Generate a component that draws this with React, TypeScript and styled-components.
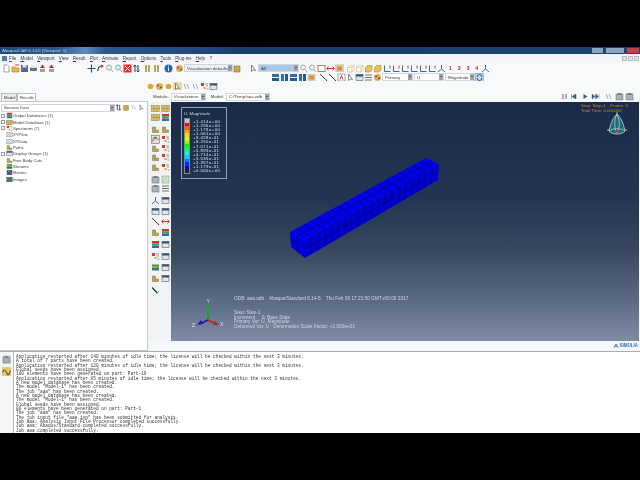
import React from "react"
import styled, { createGlobalStyle } from "styled-components"

const GlobalStyle = createGlobalStyle`
    html, body {
        margin: 0;
        padding: 0;
        background: #000;
        font-family: "Liberation Sans", Arial, sans-serif;
    }
`

const Page = styled.div`
    width: 640px;
    height: 480px;
    overflow: hidden;
    background: #000;
    padding: 47px 0;
    box-sizing: border-box;
`

const Window = styled.div`
    height: 386px;
    display: flex;
    flex-direction: column;
    background: #f6f7f9;
    color: #3a3a3a;
    font-size: 4.4px;
    overflow: hidden;
    filter: blur(0.3px);
`

const TitleBar = styled.div`
    flex: 0 0 7px;
    display: flex;
    align-items: center;
    padding-left: 2px;
    gap: 2px;
    color: #c3d3e6;
    background: linear-gradient(90deg, #1d4a7c 0, #2a5a8e 60px, #5f8cbc 85px, #2a5a8e 105px, #163f6f 250px, #1d4470 590px);
`

const TitleText = styled.span`
    flex: 1;
`

const WindowButton = styled.span<{ $w: number; $color: string }>`
    width: ${(p) => p.$w}px;
    height: 5px;
    background: ${(p) => p.$color};
    margin-right: 1px;
`

const MenuBar = styled.div`
    flex: 0 0 9px;
    display: flex;
    align-items: center;
    padding-left: 2px;
    background: #f2f4f7;
`

const MenuLogo = styled.span`
    width: 5px;
    height: 5px;
    background: #4d78ad;
    margin-right: 2px;
`

const MenuItem = styled.span`
    display: inline-block;
    margin-right: 4.3px;
    font-size: 4.5px;
    &::first-letter {
        text-decoration: underline;
    }
`

const MdiButtons = styled.div`
    margin-left: auto;
    display: flex;
    gap: 1px;
    padding-right: 1px;
`

const MdiButton = styled.span`
    width: 5px;
    height: 5px;
    background: #dfe3e8;
    border: 1px solid #b4bac2;
    box-sizing: border-box;
`

const ToolRow = styled.div<{ $h: number; $start?: number }>`
    flex: 0 0 ${(p) => p.$h}px;
    height: ${(p) => p.$h}px;
    display: flex;
    align-items: center;
    padding-left: ${(p) => p.$start ?? 0}px;
    background: #f8f9fa;
`

const Tool = styled.span<{ $gap?: number; $on?: boolean }>`
    flex: 0 0 8.8px;
    height: 8px;
    margin-left: ${(p) => p.$gap ?? 0}px;
    display: flex;
    align-items: center;
    justify-content: center;
    background: ${(p) => (p.$on ? "#e9d9a8" : "transparent")};
    color: #d3232a;
    font-size: 5.5px;
    font-weight: bold;
`

const Combo = styled.span<{ $w: number; $gap?: number; $fill?: string }>`
    flex: 0 0 ${(p) => p.$w}px;
    height: 8px;
    margin-left: ${(p) => p.$gap ?? 0}px;
    box-sizing: border-box;
    display: flex;
    align-items: center;
    padding-left: 2px;
    background: ${(p) => p.$fill ?? "#fff"};
    border: 1px solid #d3d6da;
    white-space: nowrap;
    overflow: hidden;
    position: relative;
`

const ComboArrow = styled.span`
    position: absolute;
    right: 0;
    top: 0;
    bottom: 0;
    width: 4px;
    background: #9aa2ad;
    &::after {
        content: "";
        position: absolute;
        left: 1px;
        top: 2px;
        border: 1px solid transparent;
        border-top-color: #222;
    }
`

const Label = styled.span<{ $gap?: number }>`
    margin-left: ${(p) => p.$gap ?? 0}px;
`

const Body = styled.div`
    flex: 1;
    min-height: 0;
    display: flex;
`

const LeftPanel = styled.div`
    flex: 0 0 148px;
    min-width: 0;
    display: flex;
    flex-direction: column;
    padding-top: 12px;
    box-sizing: border-box;
    background: #f8f9fa;
`

const Tabs = styled.div`
    display: flex;
    height: 8px;
    padding-left: 1px;
`

const Tab = styled.span<{ $active?: boolean }>`
    padding: 0 2px;
    line-height: 8px;
    font-size: 4.2px;
    background: ${(p) => (p.$active ? "#fff" : "#eceef1")};
    border: 1px solid #b9bec5;
    border-bottom: 0;
    box-sizing: border-box;
    width: ${(p) => (p.$active ? 19 : 16)}px;
`

const TreePanel = styled.div`
    flex: 1;
    min-width: 0;
    background: #fff;
    border: 1px solid #c3c7cd;
    border-left: 0;
    padding: 1px 1px;
    display: flex;
    flex-direction: column;
    font-size: 4.2px;
`

const TreeBar = styled.div`
    display: flex;
    align-items: center;
    height: 9px;
    margin-bottom: 0.5px;
`

const TreeTool = styled.span`
    flex: 0 0 7.6px;
    display: flex;
    justify-content: center;
`

const TreeRow = styled.div`
    height: 6.35px;
    display: flex;
    align-items: center;
    white-space: nowrap;
`

const Expander = styled.span<{ $shown: boolean }>`
    flex: 0 0 4px;
    height: 4px;
    margin-right: 1px;
    box-sizing: border-box;
    border: ${(p) => (p.$shown ? "1px solid #99a" : "0")};
`

const RightColumn = styled.div`
    flex: 1;
    min-width: 0;
    display: flex;
    flex-direction: column;
`

const Work = styled.div`
    flex: 1;
    min-height: 0;
    display: flex;
`

const Toolbox = styled.div`
    flex: 0 0 23px;
    padding-left: 2.5px;
    box-sizing: border-box;
    background: #f2f3f5;
`

const ToolboxRow = styled.div<{ $gap: number }>`
    display: flex;
    gap: 1px;
    height: 9px;
    margin-top: ${(p) => p.$gap}px;
`

const Viewport = styled.div`
    flex: 1;
    margin-right: 1px;
    position: relative;
    overflow: hidden;
    background: linear-gradient(180deg, #1a2b4a 0%, #233552 40%, #37475f 62%, #5f6e88 85%, #7f8ca6 100%);
    color: #ced4de;
`

const Legend = styled.div`
    position: absolute;
    left: 10px;
    top: 5px;
    width: 46px;
    height: 72px;
    box-sizing: border-box;
    border: 1px solid #8fa0b8;
    padding: 3px 2px;
`

const LegendBody = styled.div`
    display: flex;
    gap: 3px;
    margin-top: 2px;
`

const ColorBar = styled.div`
    flex: 0 0 6px;
    height: 56px;
    display: flex;
    flex-direction: column;
    border: 1px solid #7f8a98;
    box-sizing: border-box;
`

const ColorStep = styled.span<{ $color: string }>`
    flex: 1;
    background: ${(p) => p.$color};
`

const LegendValues = styled.div`
    padding-top: 2px;
    font-size: 4.2px;
    letter-spacing: 0.5px;
    line-height: 4.1px;
    color: #dfe4ea;
`

const StateText = styled.div`
    position: absolute;
    right: 3px;
    top: 1px;
    width: 55px;
    color: #c88a35;
    font-size: 4.4px;
    line-height: 5px;
    white-space: pre;
`

const Compass = styled.svg`
    position: absolute;
    left: 436px;
    top: 10px;
`

const Beam = styled.svg`
    position: absolute;
    left: 118px;
    top: 48px;
`

const Triad = styled.svg`
    position: absolute;
    left: 20px;
    top: 197px;
`

const Caption = styled.div`
    position: absolute;
    left: 63px;
    top: 195px;
    font-size: 4.75px;
    line-height: 4.4px;
    white-space: pre;
`

const CaptionLead = styled.div`
    margin-bottom: 10px;
`

const Strip = styled.div`
    flex: 0 0 10px;
    display: flex;
    justify-content: flex-end;
    align-items: center;
    padding-right: 2px;
    gap: 1px;
    color: #2f6fb5;
    font-size: 4.5px;
    font-weight: bold;
    background: #f6f7f8;
`

const MessageArea = styled.div`
    flex: 0 0 82px;
    display: flex;
    background: #f4f5f7;
    border-top: 1px solid #a9adb3;
    box-sizing: border-box;
`

const MessageTools = styled.div`
    flex: 0 0 13px;
    display: flex;
    flex-direction: column;
    align-items: center;
    gap: 3px;
    padding-top: 3.5px;
`

const MessageTool = styled.span<{ $on?: boolean }>`
    width: 9px;
    height: 9px;
    display: flex;
    align-items: center;
    justify-content: center;
    background: ${(p) => (p.$on ? "#e8c95c" : "#e4e6e8")};
`

const MessageLog = styled.div`
    flex: 1;
    background: #fff;
    border-left: 1px solid #b9bdc3;
    padding: 3px 0 0 2px;
    font-family: "Liberation Mono", "Courier New", monospace;
    font-size: 4.45px;
    line-height: 4.35px;
    white-space: pre;
    overflow: hidden;
    color: #333;
`

type GlyphKind = keyof typeof glyphs

// tiny toolbar drawings, all on a 9x9 grid
const glyphs = {
    doc: <path d="M2 1h3.5L7 2.5V8H2z" fill="#fff" stroke="#7a828c" strokeWidth=".7" />,
    open: <><path d="M1 3h3l1 1h3v4H1z" fill="#f0b840" stroke="#a8761c" strokeWidth=".6" /><path d="M4 1h4" stroke="#d33" /></>,
    save: <><rect x="1" y="1" width="7" height="7" fill="#54688a" /><rect x="2.5" y="1" width="4" height="2.5" fill="#dde" /></>,
    print: <><rect x="1" y="3.5" width="7" height="3.5" fill="#6b7480" /><rect x="2.5" y="1" width="4" height="3" fill="#dfe3ea" /></>,
    redUp: <><rect x="2" y="5" width="5" height="3" fill="#9aa2ad" /><path d="M4.5 .5L7 4H2z" fill="#c9252a" /></>,
    move: <path d="M4.5 .5v8M.5 4.5h8" stroke="#2f4f8a" strokeWidth="1.2" />,
    rotate: <><path d="M2 7a4 4 0 0 1 4-5" fill="none" stroke="#223" strokeWidth="1.1" /><path d="M5 .5L8 2 5.500 4z" fill="#c33" /></>,
    zoom: <><circle cx="4" cy="3.500" r="2.500" fill="#eef" stroke="#9aa" /><path d="M6 5.500L8 8" stroke="#c9a04a" /></>,
    fit: <><rect x=".5" y=".5" width="8" height="8" fill="#d33" /><path d="M2 2l5 5M7 2L2 7" stroke="#fff" /></>,
    swap: <path d="M3 8V1M1.500 2.500L3 1l1.500 1.500M6 1v7M4.500 6.500L6 8l1.500-1.500" fill="none" stroke="#334" />,
    bars: <path d="M3 1v7M6 1v7" stroke="#b08a3a" strokeWidth="1.6" />,
    info: <><circle cx="4.500" cy="4.500" r="4" fill="#2a64b0" /><path d="M4.500 3.500V7" stroke="#fff" /><path d="M4.500 1.500v1" stroke="#fff" /></>,
    palette: <><circle cx="4.500" cy="4.500" r="3.500" fill="#e0b050" /><circle cx="3" cy="3.500" r="1" fill="#c33" /><circle cx="6" cy="5.500" r="1" fill="#36a" /></>,
    ball: <><circle cx="4.500" cy="4.500" r="2.800" fill="#e8a030" /></>,
    box: <><rect x="1" y="2" width="6" height="6" fill="#c8a84a" stroke="#8a7228" strokeWidth=".6" /></>,
    cursor: <path d="M2.500 1v6.500L4.500 6l2 .5z" fill="#fff" stroke="#555" strokeWidth=".7" />,
    outline: <rect x="1" y="1.500" width="7" height="6" fill="#fff" stroke="#d0454a" strokeWidth=".8" />,
    redArrows: <path d="M1 4.500h7M2.500 2.500L.8 4.500l1.700 2M6.500 2.500l1.700 2-1.700 2" fill="none" stroke="#d0322a" />,
    orange: <><rect x=".5" y="1" width="8" height="7" fill="#c8cdd2" /><rect x="2" y="2.500" width="5" height="4" fill="#e8902c" /></>,
    panel: <><rect x="1" y="1" width="7" height="3" fill="#2c6fb2" /><rect x="1" y="5" width="7" height="3" fill="#1f5a98" /></>,
    panelWide: <><rect x="1" y="1" width="3" height="7" fill="#2c6fb2" /><rect x="5" y="1" width="3" height="7" fill="#1f5a98" /></>,
    cubeLine: <path d="M1.500 3.500L3.500 1.500H8V6L6 8H1.500zM1.500 3.500H6V8M6 3.500L8 1.500" fill="#fffdf0" stroke="#c8b878" strokeWidth=".6" />,
    cubeFill: <path d="M1.500 3.500L3.500 1.500H8V6L6 8H1.500z" fill="#e8c350" stroke="#a88a2c" strokeWidth=".6" />,
    axis: <><path d="M1.500 1.500v6h6" fill="none" stroke="#2e6fb8" /><path d="M7 1.500v3" stroke="#d0322a" /></>,
    triad: <path d="M4.500 1v4L1 8M4.500 5L8 8" fill="none" stroke="#2e6fb8" />,
    line: <path d="M1 1l7 7" stroke="#223" strokeWidth=".9" />,
    textBox: <><rect x="1" y="1" width="7" height="7" fill="#fff" stroke="#667" strokeWidth=".6" /><path d="M3 6.500l1.500-4 1.500 4" fill="none" stroke="#c33" /></>,
    table: <><rect x="1" y="1.500" width="7" height="6" fill="#dfe4ea" stroke="#56606c" strokeWidth=".6" /><rect x="1" y="1.500" width="7" height="2" fill="#33527e" /></>,
    list: <path d="M1 2h7M1 4.500h7M1 7h7" stroke="#6a7480" />,
    sync: <><rect x=".5" y=".5" width="8" height="8" fill="#c6d8ea" stroke="#7f97b0" strokeWidth=".6" /><path d="M2 4a2.500 2.500 0 0 1 5 0M7 5a2.500 2.500 0 0 1-5 0" fill="none" stroke="#2358a0" /></>,
    mesh: <><rect x=".5" y="1.500" width="8" height="6" fill="#dcc873" stroke="#8c7a36" strokeWidth=".5" /><path d="M3 1.500v6M6 1.500v6M.5 4.500h8" stroke="#8c7a36" strokeWidth=".5" /></>,
    spectrum: <><rect x="1" y="1" width="7" height="2.500" fill="#c33" /><rect x="1" y="3.500" width="7" height="2" fill="#3a3" /><rect x="1" y="5.500" width="7" height="2.500" fill="#36c" /></>,
    shape: <path d="M1.500 2h3v3h3v2.500h-6z" fill="#b5a455" stroke="#7d7030" strokeWidth=".5" />,
    contour: <><rect x=".5" y=".5" width="8" height="8" fill="#e6e0dc" stroke="#555" strokeWidth=".5" /><path d="M1.500 6.500C3 3 5 3 7.500 4.500" stroke="#c33" fill="none" /><path d="M1.500 4C3 2 5 2 6 2.500" stroke="#2a8a3c" fill="none" /></>,
    dots: <><rect x="1" y="1" width="3" height="3" fill="#d93a2a" /><rect x="3.500" y="5" width="2" height="2" fill="#e0a030" /><path d="M5 2h3M6 4h2M6.500 7h2" stroke="#7f9cb8" /></>,
    wave: <path d="M.5 5.500q2-5 4 0t4-2" fill="none" stroke="#555" strokeWidth="1.100" />,
    grey: <><rect x="1" y="2" width="7" height="6" fill="#aab0b8" stroke="#6a7078" strokeWidth=".5" /><rect x="2.500" y="1" width="4" height="2" fill="#787f88" /></>,
    pause: <path d="M3 2v5M6 2v5" stroke="#6a7480" strokeWidth="1.100" />,
    prev: <path d="M7 2v5L3 4.500zM2.500 2v5" fill="#3d5a85" stroke="#3d5a85" strokeWidth=".5" />,
    next: <path d="M2.500 2v5l4-2.500z" fill="#3d5a85" />,
    last: <path d="M1 2v5l3-2.500zM4.500 2v5l3-2.500zM8 2v5" fill="#3d5a85" stroke="#3d5a85" strokeWidth=".4" />,
    link: <path d="M2 2l2 5M5 2l2 5" stroke="#a2a8b0" />,
    sword: <><path d="M1 1.500l5 5" stroke="#222" strokeWidth="1.100" /><path d="M5 7.500L8 5.500" stroke="#3a9a4a" /></>,
    pencil: <><rect x="1" y="1" width="7" height="7" fill="#dcdcd2" stroke="#8d8f7c" strokeWidth=".5" /><path d="M2 7l4-5" stroke="#7f7" /></>,
    movie: <><rect x="1" y="1.500" width="7" height="6" fill="#3a3f8c" /><path d="M2 5l2-2 3 3" stroke="#e4c02c" fill="none" /></>,
    image: <><rect x="1" y="1.500" width="7" height="6" fill="#4f7a5a" stroke="#556" strokeWidth=".5" /></>,
    stream: <><rect x="1" y="1.500" width="7" height="6" fill="#3a9a4a" /><path d="M1 4h7" stroke="#e6c22c" /><path d="M1 6h7" stroke="#2b50c0" /></>,
    plate: <><rect x="1" y="2" width="7" height="5.500" fill="#cfd6dc" stroke="#7a8794" strokeWidth=".5" /></>,
}

const Glyph = ({ kind, size = 9 }: { kind: GlyphKind; size?: number }) => (
    <svg width={size} height={size} viewBox="0 0 9 9">
        {glyphs[kind]}
    </svg>
)

const renderTools = (kinds: GlyphKind[]) => kinds.map((k, i) => <Tool key={i}><Glyph kind={k} /></Tool>)

const MENU = ["File", "Model", "Viewport", "View", "Result", "Plot", "Animate", "Report", "Options", "Tools", "Plug-ins", "Help"]

const TREE: [string, GlyphKind, boolean][] = [
    ["Output Databases (1)", "spectrum", true],
    ["Model Database (1)", "mesh", true],
    ["Spectrums (7)", "dots", true],
    ["XYPlots", "plate", false],
    ["XYData", "plate", false],
    ["Paths", "shape", false],
    ["Display Groups (1)", "table", true],
    ["Free Body Cuts", "shape", false],
    ["Streams", "stream", false],
    ["Movies", "movie", false],
    ["Images", "image", false],
]

const TOOLBOX: [GlyphKind, GlyphKind | null, number][] = [
    ["mesh", "mesh", 1.5],
    ["mesh", "spectrum", 0],
    ["shape", "shape", 3],
    ["contour", "dots", 1],
    ["shape", "dots", 0],
    ["shape", "dots", 0],
    ["shape", "dots", 1],
    ["grey", "pencil", 3],
    ["grey", "list", 0],
    ["triad", "table", 3],
    ["table", "table", 2],
    ["line", "redArrows", 1],
    ["shape", "spectrum", 2],
    ["spectrum", "table", 3],
    ["dots", "table", 3],
    ["stream", "table", 2],
    ["shape", "table", 2],
    ["sword", null, 3],
]

const LEGEND_COLORS = ["#c4c4c4", "#ff0000", "#ff5a00", "#ffa000", "#ffd800", "#d4ff00", "#80ff00", "#00ff00", "#00ff80", "#00ffd0", "#00d0ff", "#0080ff", "#0030ff", "#0000e0", "#222222"]

const LEGEND_VALUES = ["+1.414e+00", "+1.296e+00", "+1.178e+00", "+1.061e+00", "+9.428e-01", "+8.250e-01", "+7.071e-01", "+5.893e-01", "+4.714e-01", "+3.536e-01", "+2.357e-01", "+1.179e-01", "+0.000e+00"]

const MESSAGES = [
    "Application restarted after 140 minutes of idle time; the license will be checked within the next 3 minutes.",
    "A total of 7 parts have been created.",
    "Application restarted after 120 minutes of idle time; the license will be checked within the next 3 minutes.",
    "Global seeds have been assigned.",
    "100 elements have been generated on part: Part-10",
    "Application restarted after 85 minutes of idle time; the license will be checked within the next 3 minutes.",
    "A new model database has been created.",
    'The model "Model-1" has been created.',
    'The job "aaa" has been created.',
    "A new model database has been created.",
    'The model "Model-1" has been created.',
    "Global seeds have been assigned.",
    "80 elements have been generated on part: Part-1",
    'The job "aaa" has been created.',
    'The job input file "aaa.inp" has been submitted for analysis.',
    "Job aaa: Analysis Input File Processor completed successfully.",
    "Job aaa: Abaqus/Standard completed successfully.",
    "Job aaa completed successfully.",
]

type Pt = [number, number]
const mix = (a: Pt, b: Pt, t: number): Pt => [a[0] + (b[0] - a[0]) * t, a[1] + (b[1] - a[1]) * t]

// corners of the beam in the svg's own coordinates
const A: Pt = [1, 82]
const B: Pt = [16, 90]
const C: Pt = [16, 108]
const D: Pt = [2, 97]
const E: Pt = [137, 8]
const F: Pt = [150, 14]
const G: Pt = [149, 30]

const gridLines = (p: Pt, q: Pt, r: Pt, s: Pt, nu: number, nv: number) => {
    // quad p-q-r-s, nu divisions along p-q, nv along q-r
    const lines: string[] = []
    for (let i = 1; i < nu; i++) {
        const a = mix(p, q, i / nu)
        const b = mix(s, r, i / nu)
        lines.push(`M${a[0]} ${a[1]}L${b[0]} ${b[1]}`)
    }
    for (let j = 1; j < nv; j++) {
        const a = mix(p, s, j / nv)
        const b = mix(q, r, j / nv)
        lines.push(`M${a[0]} ${a[1]}L${b[0]} ${b[1]}`)
    }
    return lines.join("")
}

const poly = (...pts: Pt[]) => pts.map((p) => p.join(",")).join(" ")

const BeamModel = () => (
    <Beam width="152" height="110" viewBox="0 0 152 110">
        <polygon points={poly(A, B, F, E)} fill="#0000f0" />
        <polygon points={poly(B, C, G, F)} fill="#0000d4" />
        <polygon points={poly(A, B, C, D)} fill="#0000dc" />
        <g fill="none" stroke="#000050" strokeWidth=".6">
            <path d={gridLines(B, F, G, C, 20, 2)} />
            <path d={gridLines(A, E, F, B, 20, 2)} />
            <path d={gridLines(A, B, C, D, 2, 2)} />
        </g>
    </Beam>
)

const App = () => (
    <Page>
        <GlobalStyle />
        <Window>
            <TitleBar>
                <TitleText>Abaqus/CAE 6.14-5 [Viewport: 1]</TitleText>
                <WindowButton $w={11} $color="#8ea4bc" />
                <WindowButton $w={18} $color="#8ea4bc" />
                <WindowButton $w={12} $color="#b8453f" />
            </TitleBar>
            <MenuBar>
                <MenuLogo />
                {MENU.map((m) => (
                    <MenuItem key={m}>{m}</MenuItem>
                ))}
                <MenuItem>?</MenuItem>
                <MdiButtons>
                    <MdiButton />
                    <MdiButton />
                    <MdiButton />
                </MdiButtons>
            </MenuBar>
            <ToolRow $h={10} $start={2}>
                {renderTools(["doc", "open", "save", "print", "redUp", "redUp"])}
                <Tool $gap={31}><Glyph kind="move" /></Tool>
                {renderTools(["rotate", "zoom", "zoom", "fit", "swap"])}
                <Tool $gap={2}><Glyph kind="bars" /></Tool>
                <Tool><Glyph kind="bars" /></Tool>
                <Tool $gap={3}><Glyph kind="info" /></Tool>
                <Tool $gap={2}><Glyph kind="palette" /></Tool>
                <Combo $w={49} $gap={0} $fill="#eef1f4">
                    Visualization defaults
                    <ComboArrow />
                </Combo>
                <Tool><Glyph kind="box" /></Tool>
                <Tool $gap={7}><Glyph kind="cursor" /></Tool>
                <Combo $w={41} $fill="#a9c8ea">
                    All
                    <ComboArrow />
                </Combo>
                {renderTools(["zoom", "zoom", "outline", "redArrows"])}
                <Tool $on><Glyph kind="orange" /></Tool>
                <Tool $gap={2}><Glyph kind="cubeLine" /></Tool>
                <Tool><Glyph kind="cubeLine" /></Tool>
                <Tool><Glyph kind="cubeFill" /></Tool>
                <Tool><Glyph kind="cubeFill" /></Tool>
                <Tool $gap={1}><Glyph kind="axis" /></Tool>
                {renderTools(["axis", "axis", "axis", "axis", "axis", "triad"])}
                <Tool>1</Tool>
                <Tool>2</Tool>
                <Tool>3</Tool>
                <Tool>4</Tool>
                <Tool><Glyph kind="triad" /></Tool>
            </ToolRow>
            <ToolRow $h={8} $start={271}>
                {renderTools(["panel", "panelWide", "panel", "panelWide", "orange"])}
                <Tool $gap={3}><Glyph kind="line" /></Tool>
                <Tool><Glyph kind="line" /></Tool>
                <Tool><Glyph kind="textBox" /></Tool>
                {renderTools(["cursor", "table", "list"])}
                <Tool><Glyph kind="palette" /></Tool>
                <Combo $w={31}>
                    Primary
                    <ComboArrow />
                </Combo>
                <Combo $w={30} $gap={1}>
                    U
                    <ComboArrow />
                </Combo>
                <Combo $w={30} $gap={1}>
                    Magnitude
                    <ComboArrow />
                </Combo>
                <Tool><Glyph kind="sync" /></Tool>
            </ToolRow>
            <Body>
                <LeftPanel>
                    <Tabs>
                        <Tab>Model</Tab>
                        <Tab $active>Results</Tab>
                    </Tabs>
                    <TreePanel>
                        <TreeBar>
                            <Combo $w={114}>
                                Session Data
                                <ComboArrow />
                            </Combo>
                            {(["swap", "box", "link", "cursor"] as GlyphKind[]).map((k) => (
                                <TreeTool key={k}><Glyph kind={k} size={7} /></TreeTool>
                            ))}
                        </TreeBar>
                        {TREE.map(([name, kind, shown]) => (
                            <TreeRow key={name}>
                                <Expander $shown={shown} />
                                <Glyph kind={kind} size={7} />
                                {name}
                            </TreeRow>
                        ))}
                    </TreePanel>
                </LeftPanel>
                <RightColumn>
                    <ToolRow $h={10}>
                        <Tool $gap={-2}><Glyph kind="ball" /></Tool>
                        {renderTools(["palette", "ball"])}
                        <Tool $on><Glyph kind="cursor" /></Tool>
                        {renderTools(["link", "link", "dots", "table"])}
                    </ToolRow>
                    <ToolRow $h={11} $start={5}>
                        <Label>Module:</Label>
                        <Combo $w={35} $gap={2}>
                            Visualization
                            <ComboArrow />
                        </Combo>
                        <Label $gap={5}>Model:</Label>
                        <Combo $w={44} $gap={2}>
                            C:/Temp/aaa.odb
                            <ComboArrow />
                        </Combo>
                        <Tool $gap={290.5}><Glyph kind="pause" /></Tool>
                        <Tool><Glyph kind="prev" /></Tool>
                        <Tool $gap={2.4}><Glyph kind="next" /></Tool>
                        <Tool $gap={1.2}><Glyph kind="last" /></Tool>
                        <Tool $gap={4.2}><Glyph kind="link" /></Tool>
                        <Tool $gap={2.2}><Glyph kind="grey" /></Tool>
                        <Tool $gap={1.2}><Glyph kind="grey" /></Tool>
                    </ToolRow>
                    <Work>
                        <Toolbox>
                            {TOOLBOX.map(([l, r, gap], i) => (
                                <ToolboxRow key={i} $gap={gap}>
                                    <Glyph kind={l} />
                                    {r && <Glyph kind={r} />}
                                </ToolboxRow>
                            ))}
                        </Toolbox>
                        <Viewport>
                            <Legend>
                                U, Magnitude
                                <LegendBody>
                                    <ColorBar>
                                        {LEGEND_COLORS.map((c) => (
                                            <ColorStep key={c} $color={c} />
                                        ))}
                                    </ColorBar>
                                    <LegendValues>
                                        {LEGEND_VALUES.map((v) => (
                                            <div key={v}>{v}</div>
                                        ))}
                                    </LegendValues>
                                </LegendBody>
                            </Legend>
                            <StateText>{"Step: Step-1    Frame: 0\nTotal Time: 0.000000"}</StateText>
                            <Compass width="22" height="26" viewBox="0 0 22 26">
                                <path d="M10 2C4 8 3 15 2 19c3 4 13 4 16 0C17 15 16 8 10 2z" fill="#1d6b78" stroke="#c9d4e4" strokeWidth=".8" />
                                <path d="M10 2c-3 6-3 14 0 19M10 2c3 6 3 14 0 19M2 19c4-3 12-3 16 0" fill="none" stroke="#c9d4e4" strokeWidth=".7" />
                                <circle cx="10" cy="19" r="1.500" fill="#d22" />
                                <path d="M10 0v2M0 18h2M18 18h2" stroke="#c8c83a" />
                            </Compass>
                            <BeamModel />
                            <Triad width="34" height="32" viewBox="0 0 34 32">
                                <path d="M17 21V8" stroke="#17a32c" strokeWidth="1.800" />
                                <path d="M14.500 10L17 5l2.500 5z" fill="#17a32c" />
                                <path d="M17 21l-7 3.500" stroke="#1a1aa8" strokeWidth="1.800" />
                                <path d="M6 26l4-5 2 4z" fill="#1a1aa8" />
                                <path d="M17 21l7 3.500" stroke="#c22020" strokeWidth="1.800" />
                                <path d="M28 26l-6 0 2-4z" fill="#c22020" />
                                <text x="15.500" y="3.500" fontSize="5" fill="#dfe4ea">Y</text>
                                <text x="29" y="26.500" fontSize="5" fill="#dfe4ea">X</text>
                                <text x="1" y="28" fontSize="5" fill="#dfe4ea">Z</text>
                            </Triad>
                            <Caption>
                                <CaptionLead>{"ODB: aaa.odb    Abaqus/Standard 6.14-5    Thu Feb 09 17:21:50 GMT+00:00 2017"}</CaptionLead>
                                {"Step: Step-1\nIncrement     0: Base State\nPrimary Var: U, Magnitude\nDeformed Var: U   Deformation Scale Factor: +1.000e+01"}
                            </Caption>
                        </Viewport>
                    </Work>
                    <Strip>
                        <svg width="6" height="6" viewBox="0 0 6 6">
                            <path d="M1 5l2-4 2 4M1.500 3h3" fill="none" stroke="#2f6fb5" strokeWidth=".8" />
                        </svg>
                        SIMULIA
                    </Strip>
                </RightColumn>
            </Body>
            <MessageArea>
                <MessageTools>
                    <MessageTool><Glyph kind="grey" /></MessageTool>
                    <MessageTool $on><Glyph kind="wave" /></MessageTool>
                </MessageTools>
                <MessageLog>{MESSAGES.join("\n")}</MessageLog>
            </MessageArea>
        </Window>
    </Page>
)

export default App
